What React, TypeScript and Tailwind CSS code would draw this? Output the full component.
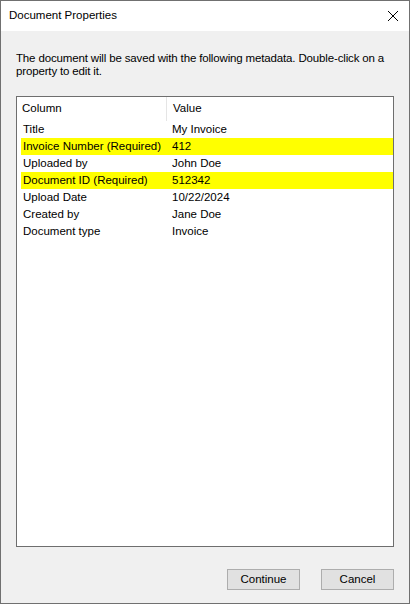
import React from 'react';

const rows = [
  { name: 'Title', value: 'My Invoice', required: false },
  { name: 'Invoice Number (Required)', value: '412', required: true },
  { name: 'Uploaded by', value: 'John Doe', required: false },
  { name: 'Document ID (Required)', value: '512342', required: true },
  { name: 'Upload Date', value: '10/22/2024', required: false },
  { name: 'Created by', value: 'Jane Doe', required: false },
  { name: 'Document type', value: 'Invoice', required: false },
];

const App: React.FC = () => {
  return (
    <div
      className="w-[410px] h-[604px] border border-[#707070] bg-[#f0f0f0] flex flex-col text-[11.5px] text-black"
      style={{ fontFamily: '"Liberation Sans", Arial, sans-serif' }}
    >
      <div className="h-[30px] bg-white flex items-center justify-between pl-[8px] pr-[8px] shrink-0">
        <span>Document Properties</span>
        <svg width="12" height="12" viewBox="0 0 12 12" className="mr-[2px]">
          <path d="M1 1 L11 11 M11 1 L1 11" stroke="#000" strokeWidth="1" />
        </svg>
      </div>

      <div className="flex-1 flex flex-col px-[15px]">
        <p className="mt-[21px] leading-[13px] tracking-[-0.15px] pr-[8px]">
          The document will be saved with the following metadata. Double-click on a property to edit it.
        </p>

        <div className="mt-[18px] h-[451px] border border-[#6e6e6e] bg-white">
          <div className="flex h-[24px] items-center">
            <div className="w-[150px] h-full pl-[5px] flex items-center border-r border-[#e5e5e5]">Column</div>
            <div className="pl-[6px]">Value</div>
          </div>
          <div className="pl-[4px]">
            {rows.map((row) => (
              <div
                key={row.name}
                className={`flex h-[17px] items-center ${row.required ? 'bg-[#ffff00]' : ''}`}
              >
                <div className="w-[151px] pl-[2px] whitespace-nowrap">{row.name}</div>
                <div className="whitespace-nowrap">{row.value}</div>
              </div>
            ))}
          </div>
        </div>

        <div className="flex justify-end gap-[21px] mt-[22px]">
          <button className="w-[73px] h-[21px] bg-[#e1e1e1] border border-[#adadad] flex items-center justify-center">
            Continue
          </button>
          <button className="w-[73px] h-[21px] bg-[#e1e1e1] border border-[#adadad] flex items-center justify-center">
            Cancel
          </button>
        </div>
      </div>
    </div>
  );
};

export default App;
